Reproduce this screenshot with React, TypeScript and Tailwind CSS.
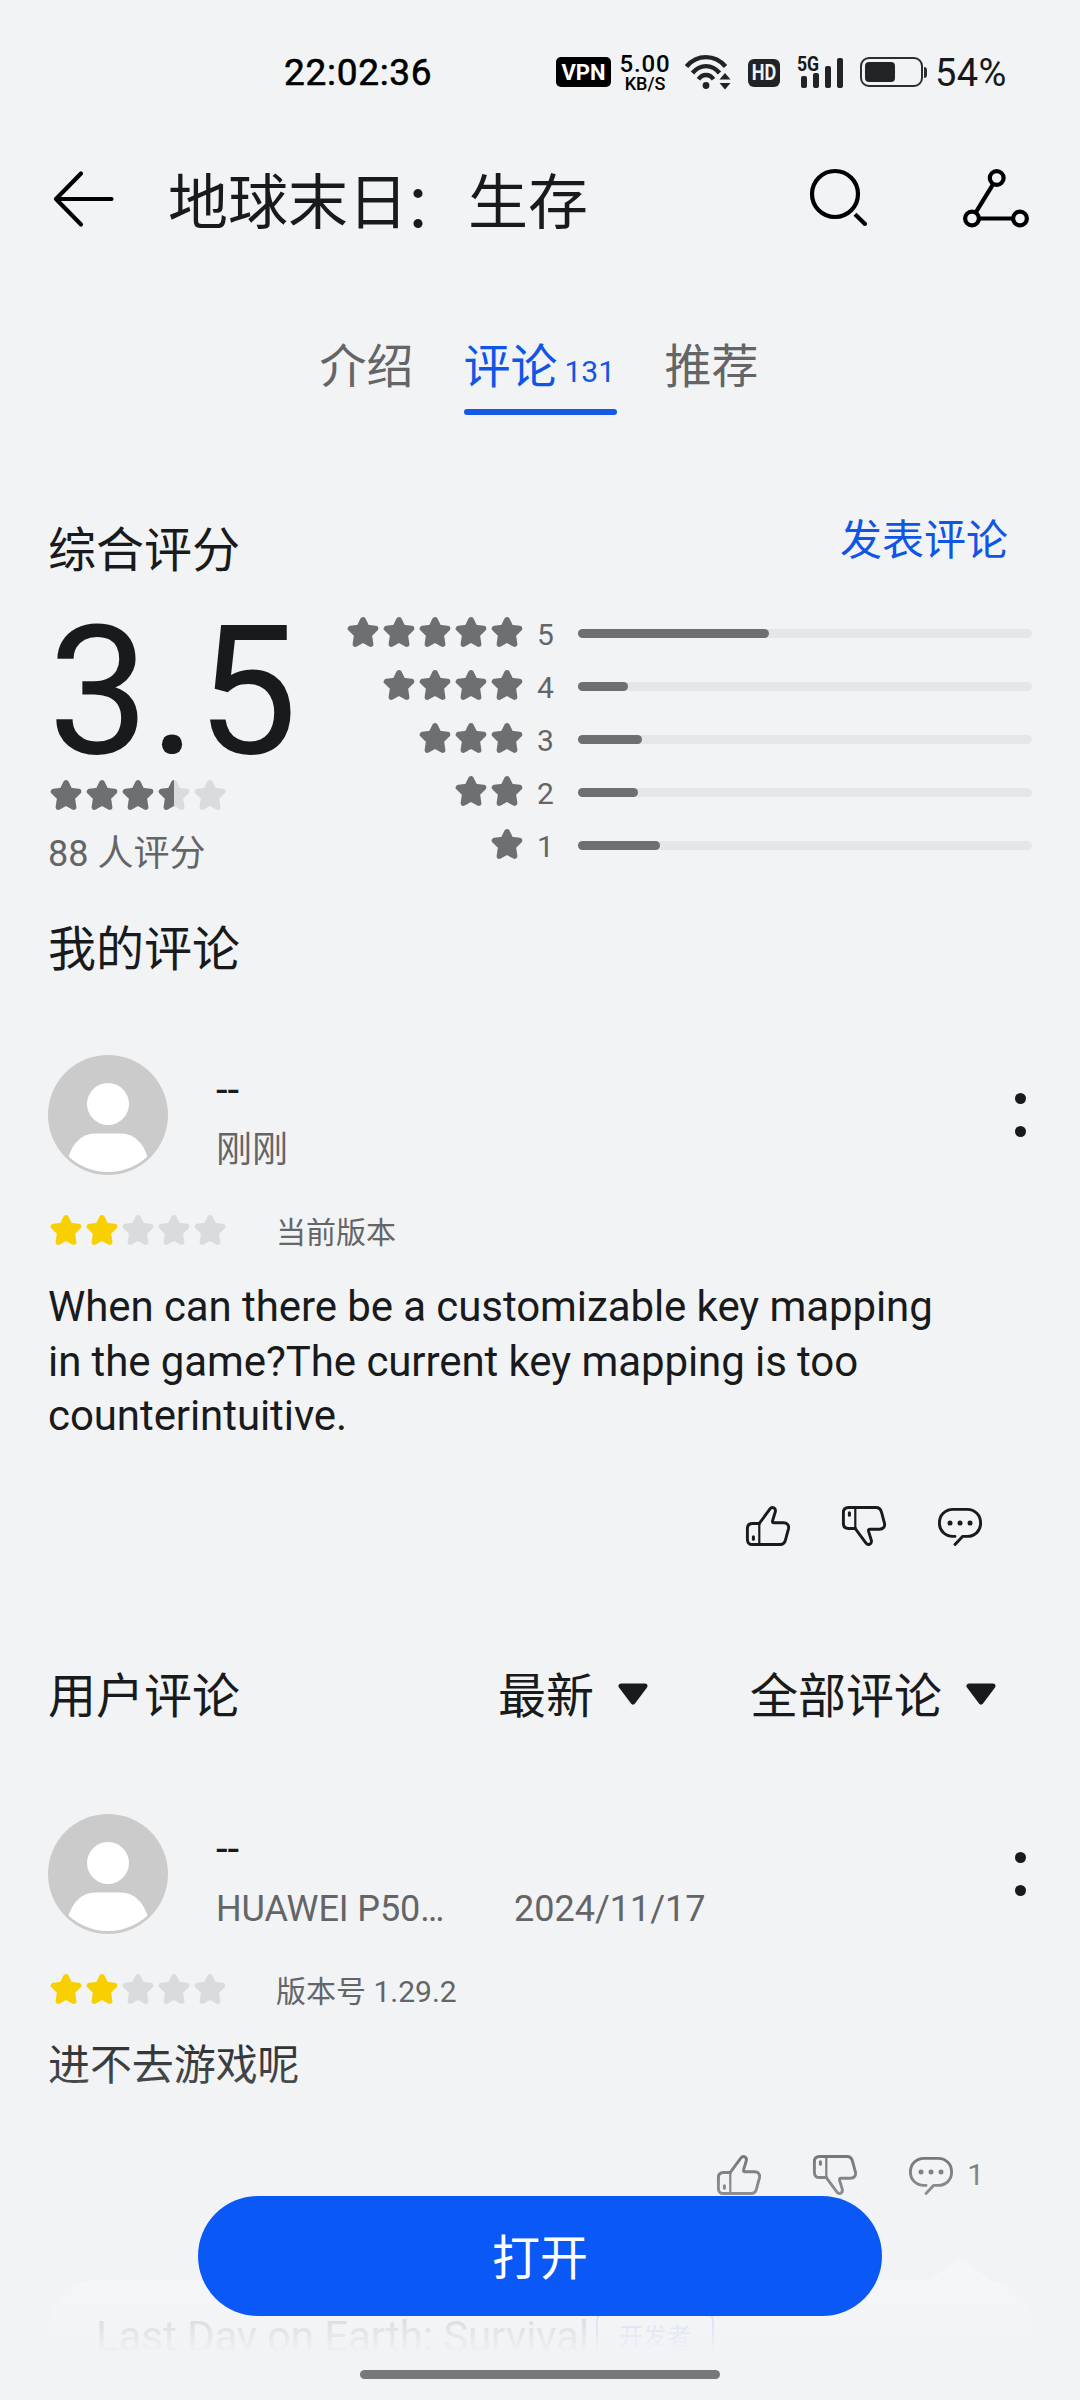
import clsx from "clsx";

const HISTOGRAM = [
  { stars: 5, percent: 42 },
  { stars: 4, percent: 11 },
  { stars: 3, percent: 14.1 },
  { stars: 2, percent: 13.2 },
  { stars: 1, percent: 18.1 },
];

const STAR_PATH =
  "M18 5.8 L21.8 13.4 L30.5 14.6 L24.2 20.8 L25.6 30.1 L18 25.9 L10.4 30.1 L11.8 20.8 L5.5 14.6 L14.2 13.4 Z";

function Star({ className }: { className?: string }) {
  return (
    <svg viewBox="0 0 36 36" className={clsx("size-9 shrink-0", className)}>
      <path
        d={STAR_PATH}
        fill="currentColor"
        stroke="currentColor"
        strokeWidth="5.6"
        strokeLinejoin="round"
      />
    </svg>
  );
}

function Stars({ value, color }: { value: number; color: string }) {
  return (
    <div className="flex">
      {[0, 1, 2, 3, 4].map((i) => {
        const part = Math.min(1, Math.max(0, value - i));
        return (
          <div key={i} className="relative size-9">
            {part < 1 && <Star className="text-[#dadbdd]" />}
            {part > 0 && (
              <div
                className="absolute inset-y-0 left-0 overflow-hidden"
                style={{ width: `${part * 100}%` }}>
                <Star className={color} />
              </div>
            )}
          </div>
        );
      })}
    </div>
  );
}

function StatusBar() {
  return (
    <div className="h-[144px] pt-[51px] flex text-[#17181a]">
      <div className="w-[272px] ml-[284px] -mr-px h-[42px] pt-[2px] flex items-center text-[37px] tracking-[0.7px] text-black [-webkit-text-stroke:0.6px_#000]">
        22:02:36
      </div>
      <div className="flex h-[42px] items-center">
        <div className="ml-px w-[55px] h-[30px] rounded-[5px] bg-black text-white text-[22px] font-bold flex items-center justify-center">
          VPN
        </div>
        <div className="w-[56px] ml-[6px] flex flex-col items-center text-black font-medium">
          <span className="text-[24px] leading-[22px] tracking-[0.8px]">5.00</span>
          <span className="text-[18px] leading-[17px]">KB/S</span>
        </div>
        <svg viewBox="0 0 48 36" className="w-12 h-9 ml-3" fill="none">
          <g stroke="#222325" strokeWidth="4.4">
            <path d="M1.5 12.5C12 0 30 0 40.5 12.5" />
            <path d="M7.5 19C15 9.8 27 9.8 34.5 19" />
            <path d="M13.5 25.2C17.5 19.6 24.5 19.6 28.5 25.2" />
          </g>
          <circle cx="21" cy="31.5" r="3.4" fill="#222325" />
          <path d="M34.5 25.5L40 19L45.5 25.5ZM34.5 29L40 35.5L45.5 29Z" fill="#222325" />
        </svg>
        <div className="ml-[15px] w-8 h-7 mt-px rounded-[6px] bg-[#222325] text-[#f1f3f5] text-[22px] font-bold flex items-center justify-center">
          <span className="scale-x-[0.82]">HD</span>
        </div>
        <div className="relative ml-[17px] w-[46px] h-[34px]">
          <span className="absolute left-0 top-0 text-[21px] leading-[18px] font-bold origin-left scale-x-[0.84]">
            5G
          </span>
          <div className="flex items-end gap-[6px] h-full pl-1 pb-px">
            <i className="w-[6px] h-3 rounded-[2px] bg-[#222325]" />
            <i className="w-[6px] h-[15px] rounded-[2px] bg-[#222325]" />
            <i className="w-[6px] h-[22px] rounded-[2px] bg-[#222325]" />
            <i className="w-[6px] h-[30px] rounded-[2px] bg-[#222325]" />
          </div>
        </div>
        <div className="ml-[17px] w-[63px] h-[30px] rounded-[9px] border-[2.5px] border-[#2d2e30] p-[3px]">
          <div className="w-[30px] h-full rounded-[4px] bg-[#222325]" />
        </div>
        <div className="ml-px w-[3px] h-[11px] rounded-r-[3px] bg-[#2d2e30]" />
        <span className="ml-[8px] pt-[2px] text-[38px] tracking-[0.4px]">54%</span>
      </div>
    </div>
  );
}

function Header() {
  return (
    <header className="h-[112px] flex items-center pl-12 pr-12 text-black">
      <svg viewBox="0 0 72 72" className="size-[72px]" fill="none" stroke="currentColor" strokeWidth="4.2" strokeLinecap="round" strokeLinejoin="round">
        <path d="M33 9.5L8 35L33 60.5M8 35H63.5" />
      </svg>
      <h1 className="ml-12 mt-[7px] flex-1 text-[60px] leading-[72px] text-[#191a1c]">
        地球末日<span className="relative -left-[5px] top-[4px]">：</span>生存
      </h1>
      <svg viewBox="0 0 72 72" className="size-[72px] mr-[84px]" fill="none" stroke="currentColor" strokeWidth="4.2">
        <circle cx="31" cy="30" r="23" />
        <path d="M51 50.3L61 60" />
        <circle cx="61" cy="60" r="2.1" fill="currentColor" stroke="none" />
      </svg>
      <svg viewBox="0 0 72 72" className="size-[72px]" fill="none" stroke="currentColor" strokeWidth="4.2">
        <circle cx="36.7" cy="14" r="6.9" />
        <circle cx="12" cy="54.5" r="6.9" />
        <circle cx="60" cy="54.5" r="6.9" />
        <path d="M33 20.3L15.8 48.3M19 54.5H53" />
      </svg>
    </header>
  );
}

function Tabs() {
  return (
    <nav className="h-[160px] pt-[79px] flex justify-center gap-12 text-[47px] leading-[64px] text-[#646567]">
      <span className="w-24">介绍</span>
      <div className="h-[81px] w-[153px] text-[#0f56e6]">
        <div className="flex h-[74px]">
          <span className="w-24">评论</span>
          <span className="text-[30px] leading-[74px] ml-[5px]">131</span>
        </div>
        <div className="h-[6px] rounded-full bg-[#1559e6]" />
      </div>
      <span className="w-24">推荐</span>
    </nav>
  );
}

function Summary() {
  return (
    <section className="px-12 h-[472px] pt-[102px]">
      <div className="flex justify-between h-[64px]">
        <h2 className="text-[48px] leading-[66px] text-[#191a1c]">综合评分</h2>
        <span className="text-[42px] leading-[46px] mr-6 text-[#0f56e6]">发表评论</span>
      </div>
      <div className="flex justify-between">
        <div className="w-[270px]">
          <div className="text-[180px] leading-[220px] h-[195px] text-[#191a1c]">3.5</div>
          <Stars value={3.5} color="text-[#6e6f71]" />
          <div className="mt-4 text-[36px] leading-[50px] text-[#646567]">88 人评分</div>
        </div>
        <div className="mt-[25px] w-[687px]">
          {HISTOGRAM.map((row) => (
            <div key={row.stars} className="h-[53px] flex items-center">
              <div className="flex flex-1 justify-end -mt-[3px]">
                {Array.from({ length: row.stars }, (_, i) => (
                  <Star key={i} className="text-[#6e6f71]" />
                ))}
              </div>
              <span className="w-[41px] ml-3 mt-[2px] text-[30px] leading-[36px] text-[#646567]">
                {row.stars}
              </span>
              <div className="w-[454px] h-[9px] rounded-full bg-[#e5e6e8]">
                <div
                  className="h-full rounded-full bg-[#6e6f71]"
                  style={{ width: `${row.percent}%` }}
                />
              </div>
            </div>
          ))}
        </div>
      </div>
    </section>
  );
}

function Avatar() {
  return (
    <svg viewBox="0 0 120 120" className="size-[120px]">
      <circle cx="60" cy="60" r="60" fill="#cbcbcb" />
      <circle cx="60" cy="49" r="21" fill="#fff" />
      <path d="M20.5 101.5C25 88 34 78.5 47 78.5H73C86 78.5 95 88 99.5 101.5C89 111 76 117 60 117S31 111 20.5 101.5Z" fill="#fff" />
    </svg>
  );
}

function ThumbUp({ className }: { className?: string }) {
  return (
    <svg viewBox="0 0 48 48" className={clsx("size-12", className)} fill="none" stroke="currentColor" strokeWidth="2.9" strokeLinejoin="round" strokeLinecap="round">
      <path d="M15.5 21.2L25.8 7.2C28.2 4 32.2 6 31.3 9.8L28.6 18.6C28.2 20.2 28.9 20.8 30 20.8H39.5C43.2 20.8 45.2 23.3 44.5 26.6L41.5 37.8C40.8 40.8 38.8 42.5 36 42.5H8.5C5.3 42.5 3.4 40.5 3.4 37.4V26.6C3.4 23.3 5.3 21.5 8.5 21.5H15.5" />
      <path d="M15.3 21.5V42.5" strokeWidth="2.2" />
      <path d="M9.4 34.8V37.2" strokeWidth="3" />
    </svg>
  );
}

function Bubble({ className }: { className?: string }) {
  return (
    <svg viewBox="0 0 48 48" className={clsx("size-12", className)} fill="none" stroke="currentColor" strokeWidth="2.9" strokeLinejoin="round" strokeLinecap="round">
      <path d="M19 34.4H17C9 34.4 3.4 28.6 3.4 21S9 7.4 17 7.4H31C39 7.4 44.6 13.2 44.6 21S39 34.4 31 34.4H26.5L19 42.4" />
      <g fill="currentColor" stroke="none">
        <circle cx="14" cy="21" r="2.5" />
        <circle cx="24" cy="21" r="2.5" />
        <circle cx="34" cy="21" r="2.5" />
      </g>
    </svg>
  );
}

interface ReviewProps {
  device?: string;
  time: string;
  version: string;
  text: string;
  replies?: number;
}

function Review({ device, time, version, text, replies }: ReviewProps) {
  return (
    <article className="px-12">
      <div className="flex h-[120px]">
        <Avatar />
        <div className="ml-12 flex-1">
          <div className="text-[42px] leading-[50px] pt-[10px] h-[68px] text-[#191a1c]">--</div>
          <div className="flex text-[36px] leading-[54px] text-[#646567]">
            {device && <span className="w-[298px] tracking-[-0.1px]">{device}</span>}
            <span>{time}</span>
          </div>
        </div>
        <div className="w-[11px] mr-[6px] mt-[38px] flex flex-col gap-[22px]">
          <i className="size-[11px] rounded-full bg-[#191a1c]" />
          <i className="size-[11px] rounded-full bg-[#191a1c]" />
        </div>
      </div>
      <div className="mt-[35px] h-10 flex items-center">
        <Stars value={2} color="text-[#f8cf00]" />
        <span className="ml-12 mt-[6px] text-[30px] leading-[40px] text-[#646567]">{version}</span>
      </div>
      <p className="mt-[30px] w-[920px] text-[42px] leading-[54.6px] tracking-[-0.08px] text-[#191a1c]">
        {text}
      </p>
      <div className="mt-[58px] mr-12 flex justify-end items-center gap-12 text-[#191a1c]">
        <ThumbUp />
        <ThumbUp className="-scale-y-100" />
        <div className="flex items-center">
          <Bubble />
          {replies && <span className="ml-3 text-[30px] leading-[36px]">{replies}</span>}
        </div>
      </div>
    </article>
  );
}

function Dropdown({ label }: { label: string }) {
  return (
    <div className="flex items-center gap-6">
      <span>{label}</span>
      <svg viewBox="0 0 30 22" className="w-[30px] h-[22px] -mt-[5px]">
        <path d="M3 3H27L15 19Z" fill="currentColor" stroke="currentColor" strokeWidth="5" strokeLinejoin="round" />
      </svg>
    </div>
  );
}

export default function App() {
  return (
    <div className="relative w-[1080px] h-[2400px] overflow-hidden bg-[#f1f3f5] font-[Roboto,'Noto_Sans_CJK_SC',sans-serif]">
      <StatusBar />
      <Header />
      <Tabs />
      <Summary />
      <h2 className="px-12 h-[167px] pt-[29px] text-[48px] leading-[66px] text-[#191a1c]">我的评论</h2>
      <Review
        time="刚刚"
        version="当前版本"
        text="When can there be a customizable key mapping in the game?The current key mapping is too counterintuitive."
      />
      <div className="flex h-[264px] pt-[114px] pl-12 pr-[84px] text-[48px] leading-[66px] text-[#191a1c]">
        <h2 className="w-[450px] h-[66px]">用户评论</h2>
        <div className="flex flex-1 h-[66px] justify-between">
          <Dropdown label="最新" />
          <Dropdown label="全部评论" />
        </div>
      </div>
      <Review
        device="HUAWEI P50…"
        time="2024/11/17"
        version="版本号 1.29.2"
        text="进不去游戏呢"
        replies={1}
      />

      {/* developer reply, mostly hidden behind the bottom bar */}
      <div className="relative mx-12 mt-[81px] h-[200px] rounded-[48px] bg-white">
        <svg viewBox="0 0 60 20" className="absolute -top-5 left-[882px] w-[60px] h-5">
          <path d="M0 20L25 2Q30 -1 35 2L60 20Z" fill="#fff" />
        </svg>
        <div className="flex items-center pt-[30px] pl-12 text-[#191a1c]">
          <span className="text-[42px] leading-[54px] tracking-[-0.08px]">
            Last Day on Earth: Survival
          </span>
          <span className="ml-[7px] px-[21px] rounded-[10px] border-2 border-[#0a59f7] text-[24px] leading-[48px] text-[#0a59f7]">
            开发者
          </span>
        </div>
      </div>

      <div className="absolute inset-x-0 bottom-0 h-[392px] bg-linear-to-b from-[#f1f3f5]/0 to-[#f1f3f5] to-[346px] flex flex-col items-center pt-[188px]">
        <button className="w-[684px] h-[120px] rounded-full bg-[#0a59f7] text-white text-[48px] pt-[6px]">
          打开
        </button>
        <div className="mt-[54px] w-[360px] h-[9px] rounded-full bg-[#77787a]" />
      </div>
    </div>
  );
}
